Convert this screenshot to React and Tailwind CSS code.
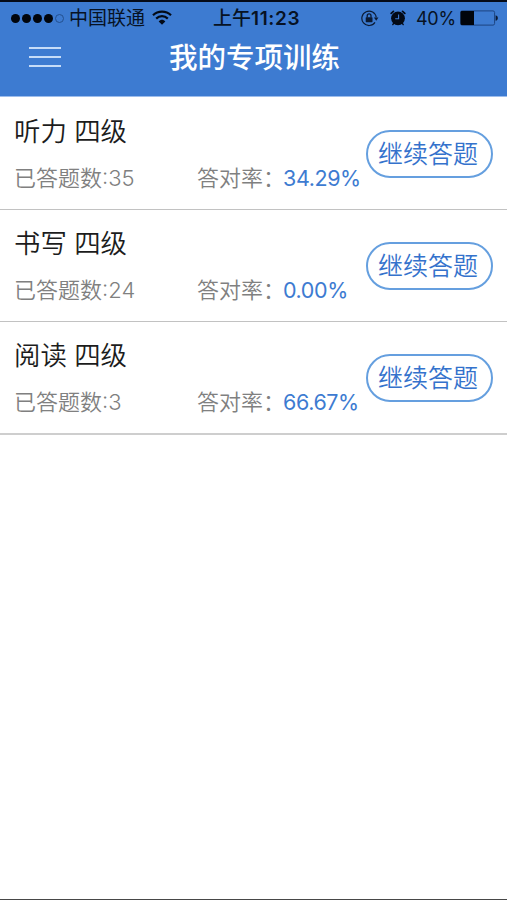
const trainings = [
  { id: 1, name: "听力 四级", answered: 35, rate: "34.29%" },
  { id: 2, name: "书写 四级", answered: 24, rate: "0.00%" },
  { id: 3, name: "阅读 四级", answered: 3, rate: "66.67%" },
];

function WifiIcon() {
  return (
    <svg width="20" height="16" viewBox="0 0 20 16" fill="none" stroke="#030a16" strokeWidth="2.2">
      <path d="M1 5.2C6 0.4 14 0.4 19 5.2" />
      <path d="M4.2 8.6C7.5 5.4 12.5 5.4 15.8 8.6" />
      <path d="M10 14.8L6.7 11.5C8.6 9.3 11.4 9.3 13.3 11.5Z" fill="#030a16" stroke="none" />
    </svg>
  );
}

function RotationLockIcon() {
  return (
    <svg width="18" height="17" viewBox="0 0 18 17" fill="none" stroke="#0b1a33">
      <path d="M14 12.4A7.2 7.2 0 1 1 15.2 7.4" strokeWidth="1.2" />
      <path d="M12.9 7.6H17.5L15.2 10.7Z" fill="#0b1a33" stroke="none" />
      <rect x="4.7" y="7.2" width="6.8" height="5" rx="0.6" fill="#0b1a33" stroke="none" />
      <path d="M6.2 7.6V5.8A1.9 1.9 0 0 1 10 5.8V7.6" strokeWidth="1.3" />
    </svg>
  );
}

function AlarmIcon() {
  return (
    <svg width="16" height="16" viewBox="0 0 16 16" fill="none" stroke="#030a16">
      <circle cx="8" cy="8.3" r="6.9" fill="#030a16" stroke="none" />
      <path d="M1.2 3.4L3.4 1.4M14.8 3.4L12.6 1.4" strokeWidth="1.7" strokeLinecap="round" />
      <path d="M3.8 13.2L2.8 14.6M12.2 13.2L13.2 14.6" strokeWidth="1.4" strokeLinecap="round" />
      <path d="M8.6 4.4V8.8H5.2" stroke="#3d7bd1" strokeWidth="1.1" />
    </svg>
  );
}

function BatteryIcon() {
  return (
    <svg width="39" height="16" viewBox="0 0 39 16" fill="none">
      <rect x="0.6" y="0.9" width="34" height="14.2" rx="1.6" stroke="#1d4480" strokeWidth="1" />
      <path d="M1.8 1H14V15H1.8Q0.6 15 0.6 13.8V2.2Q0.6 1 1.8 1Z" fill="#01050c" />
      <path d="M35.6 5.2C38.6 5.8 38.6 10.2 35.6 10.8Z" fill="#0b1a33" />
    </svg>
  );
}

function StatusBar() {
  return (
    <div className="grid h-8 grid-cols-[213px_87px_1fr] items-center text-[19px] leading-8 text-[#071223]">
      <div className="flex h-8 items-center pl-[11px]">
        <div className="flex gap-[2px]">
          <i className="size-[9px] rounded-full bg-[#01050c]" />
          <i className="size-[9px] rounded-full bg-[#01050c]" />
          <i className="size-[9px] rounded-full bg-[#01050c]" />
          <i className="size-[9px] rounded-full bg-[#01050c]" />
          <i className="size-[9px] rounded-full border border-[#23508f]" />
        </div>
        <span className="ml-[5px] mr-[7px] w-[76px] whitespace-nowrap pt-[2px]">中国联通</span>
        <WifiIcon />
      </div>
      <span className="h-8 whitespace-nowrap pt-px text-[19px] font-semibold leading-8 tracking-[0.6px]">
        <span className="font-medium tracking-normal">上午</span>11:23
      </span>
      <div className="flex h-8 items-center pl-[61px]">
        <RotationLockIcon />
        <span className="ml-[11px] mr-[10px]">
          <AlarmIcon />
        </span>
        <span className="w-[44px] whitespace-nowrap pt-[2px] text-[18px] tracking-[-0.3px]">40%</span>
        <BatteryIcon />
      </div>
    </div>
  );
}

function TrainingRow({ item }) {
  return (
    <li className="flex h-[112px] items-start border-b border-[#c2c2c2] px-[14px] last:h-[113px] last:border-b-2 last:border-[#cecece]">
      <div className="flex-1 pt-[13px]">
        <h2 className="h-10 whitespace-nowrap text-[26.4px] font-[350] leading-10 text-[#1c1c1c]">{item.name}</h2>
        <div className="mt-[11px] flex h-8 whitespace-nowrap text-[22px] font-[350] leading-8 text-[#808080]">
          <span className="w-[183px]">已答题数:{item.answered}</span>
          <span className="w-[86px]">答对率：</span>
          <span className="text-[21.5px] font-[380] tracking-[-0.4px] text-[#3d7bd1]">{item.rate}</span>
        </div>
      </div>
      <button className="mt-8 flex h-12 w-[127px] shrink-0 items-center rounded-full border-2 border-[#659fdf] pl-[10px] text-[25px] font-[350] leading-10 text-[#3472cc]">
        继续答题
      </button>
    </li>
  );
}

export default function App() {
  return (
    <div className="flex h-[900px] w-[507px] flex-col overflow-hidden border-b border-[#484848] bg-white font-['Inter','Noto_Sans_CJK_SC',sans-serif]">
      <header className="h-[97px] shrink-0 border-b border-b-[#9dbdec] border-t-2 border-t-[#050b18] bg-[#3d7bd1]">
        <StatusBar />
        <div className="grid h-[46px] grid-cols-[169px_171px_1fr] items-center">
          {/* Menu button */}
          <button className="ml-[29px] flex w-8 flex-col gap-[7px]">
            <i className="h-[2px] w-8 bg-[#c6dcf8]" />
            <i className="h-[2px] w-8 bg-[#c6dcf8]" />
            <i className="h-[2px] w-8 bg-[#c6dcf8]" />
          </button>
          <h1 className="whitespace-nowrap pt-px text-[28.5px] font-medium leading-10 text-white">
            我的专项训练
          </h1>
        </div>
      </header>

      <ul className="pt-px">
        {trainings.map((item) => (
          <TrainingRow key={item.id} item={item} />
        ))}
      </ul>
    </div>
  );
}
